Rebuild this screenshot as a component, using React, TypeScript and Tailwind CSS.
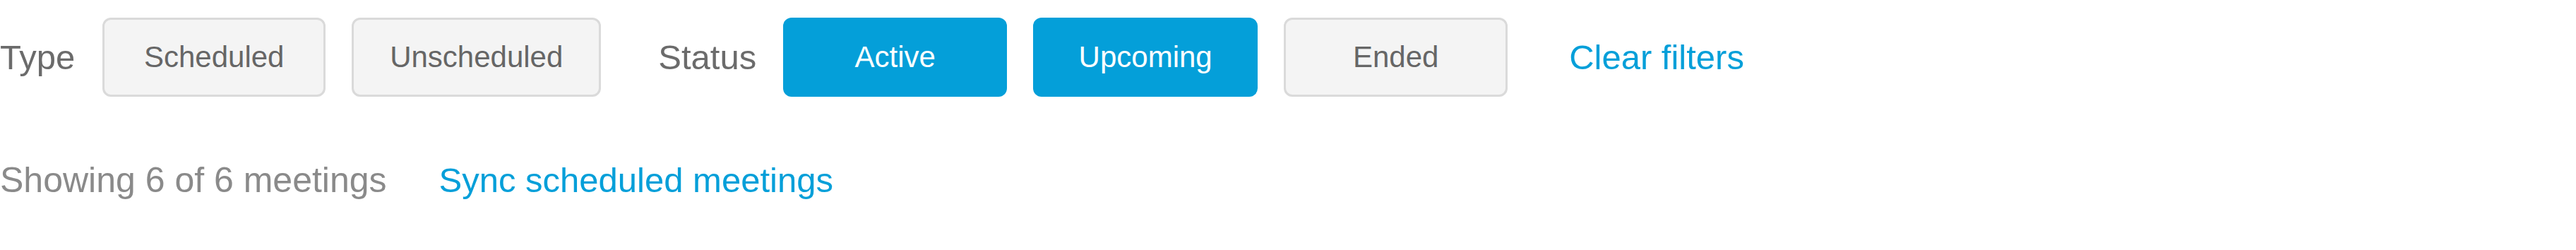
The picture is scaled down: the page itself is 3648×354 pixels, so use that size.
import React from "react";

function GrayBtn({ label, w }: { label: string; w: string }) {
  return (
    <button
      className={`${w} h-[112px] shrink-0 rounded-[12px] border-[3px] border-[#dadada] bg-[#f4f4f4] text-[42px] leading-none text-[#666666]`}
    >
      {label}
    </button>
  );
}

function BlueBtn({ label, w }: { label: string; w: string }) {
  return (
    <button
      className={`${w} h-[112px] shrink-0 rounded-[12px] bg-[#049fd9] text-[42px] leading-none text-white`}
    >
      {label}
    </button>
  );
}

export default function App() {
  return (
    <div className="w-[3648px] h-[354px] bg-white font-['Liberation_Sans',Arial,sans-serif]">
      <div className="flex items-center pt-[25px]">
        <div className="flex items-center gap-[39px]">
          <span className="text-[49px] leading-none text-[#6b6b6b]">Type</span>
          <div className="flex items-center gap-[37px]">
            <GrayBtn label="Scheduled" w="w-[316px]" />
            <GrayBtn label="Unscheduled" w="w-[353px]" />
          </div>
        </div>
        <div className="ml-[81px] flex items-center gap-[38px]">
          <span className="text-[49px] leading-none text-[#6b6b6b]">Status</span>
          <div className="flex items-center gap-[37px]">
            <BlueBtn label="Active" w="w-[317px]" />
            <BlueBtn label="Upcoming" w="w-[318px]" />
            <GrayBtn label="Ended" w="w-[317px]" />
          </div>
        </div>
        <a className="ml-[87px] text-[49px] leading-none text-[#049fd9] cursor-pointer">Clear filters</a>
      </div>
      <div className="mt-[90px] flex items-center gap-[74px] text-[50px] leading-[56px]">
        <span className="text-[#8a8a8a]">Showing 6 of 6 meetings</span>
        <a className="text-[#049fd9] text-[49px] cursor-pointer">Sync scheduled meetings</a>
      </div>
    </div>
  );
}
